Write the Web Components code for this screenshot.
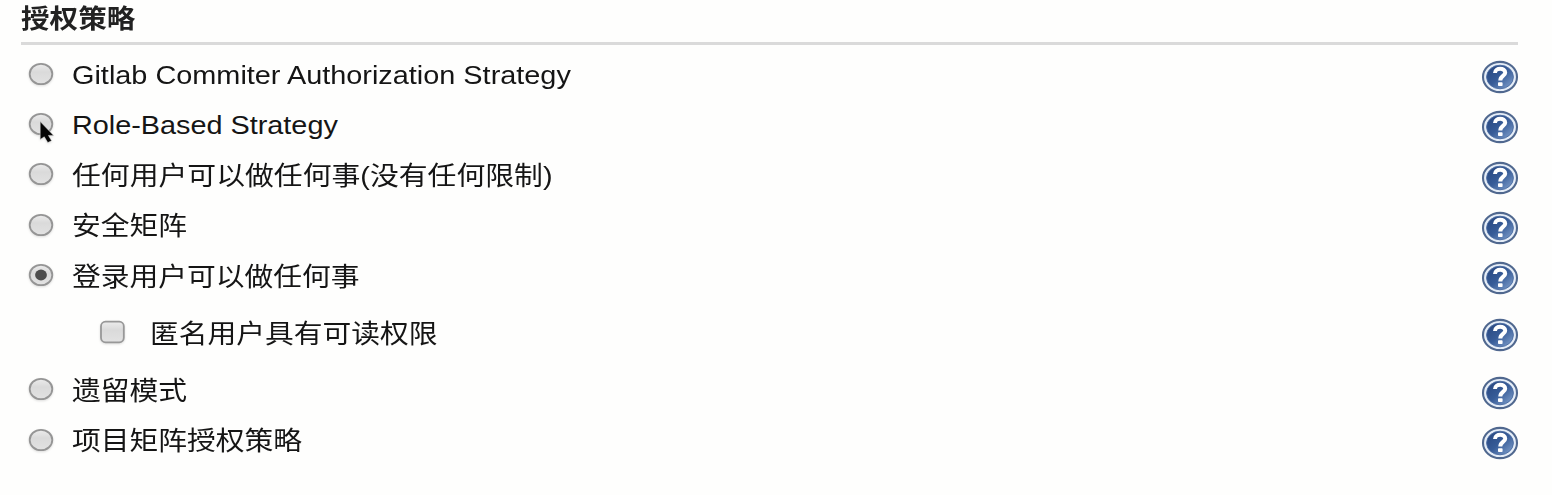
<!DOCTYPE html>
<html lang="zh-CN">
<head>
<meta charset="utf-8">
<title>授权策略</title>
<style>
html,body{margin:0;background:#fefefd;color:#151515;overflow:hidden}
body{font-family:"Liberation Sans","Noto Sans CJK SC",sans-serif;font-size:26px}
</style>
</head>
<body>
<strategy-section heading="授权策略">
  <strategy-row style="--sx:1.110" label="Gitlab Commiter Authorization Strategy"></strategy-row>
  <strategy-row hover style="--sx:1.108;--dy:-1px" label="Role-Based Strategy"></strategy-row>
  <strategy-row style="--sx:1.109" label="任何用户可以做任何事(没有任何限制)"></strategy-row>
  <strategy-row label="安全矩阵"></strategy-row>
  <strategy-row checked label="登录用户可以做任何事"></strategy-row>
  <strategy-row nested label="匿名用户具有可读权限"></strategy-row>
  <strategy-row label="遗留模式"></strategy-row>
  <strategy-row label="项目矩阵授权策略"></strategy-row>
</strategy-section>
<script>
class StrategySection extends HTMLElement {
  constructor() {
    super();
    this.attachShadow({mode:'open'}).innerHTML = `<style>
      :host{display:block;box-sizing:border-box;height:495px;padding:0 34px 0 21px}
      header{height:42px;border-bottom:3px solid #dadada}
      h1{margin:0;width:max-content;font-size:26px;line-height:38px;font-weight:700;white-space:nowrap;color:#222;transform:scaleX(1.1);transform-origin:left}
      main{padding-top:5px}
    </style><header><h1></h1></header><main><slot></slot></main>`;
    this.shadowRoot.querySelector('h1').textContent = this.getAttribute('heading');
  }
}
class ChoiceMark extends HTMLElement {
  connectedCallback() {
    const root = this.attachShadow({mode:'open'});
    const box = this.getAttribute('kind') === 'checkbox';
    const shape = box
      ? '<rect x="2" y="2.7" width="22.8" height="20.6" rx="4.5" fill="url(#f)" stroke="#989898" stroke-width="1.8"/>'
      : '<ellipse cx="14" cy="13" rx="11.3" ry="10.2" fill="url(#f)" stroke="#959595" stroke-width="1.8"/>';
    const dot = this.hasAttribute('checked') ? '<ellipse cx="14" cy="13" rx="5.9" ry="5.4" fill="#4c4c4c"/>' : '';
    const cursor = this.hasAttribute('hover')
      ? '<path d="M13.2 10.6V28.4L17.3 25.8L20.8 31.6L24.6 29.8L21.4 24.4H26.6Z" fill="#050505" stroke="#ddd" stroke-width=".5"/>' : '';
    root.innerHTML = `<style>:host{display:block;width:28px;height:26px}svg{display:block;overflow:visible;filter:drop-shadow(0 1px 1px #0002)}</style>
      <svg width="28" height="26" viewBox="0 0 28 26"><defs><linearGradient id="f" x2="0" y2="1"><stop stop-color="#ececec"/><stop offset=".4" stop-color="#dadada"/><stop offset="1" stop-color="#e2e2e2"/></linearGradient></defs>${shape}${dot}${cursor}</svg>`;
  }
}
class HelpIcon extends HTMLElement {
  constructor() {
    super();
    this.attachShadow({mode:'open'}).innerHTML = `<style>:host{display:block;width:38px;height:34px}svg{display:block}</style>
      <svg width="38" height="34" viewBox="0 0 38 34">
      <defs><linearGradient id="b" x1="0" y1="0" x2="1" y2="1"><stop stop-color="#27457d"/><stop offset=".5" stop-color="#375c98"/><stop offset="1" stop-color="#86a5d0"/></linearGradient></defs>
      <ellipse cx="19" cy="17" rx="17" ry="15.1" fill="#e6eef8" stroke="#50688f" stroke-width="2.1"/>
      <ellipse cx="19" cy="17" rx="13.4" ry="11.8" fill="url(#b)" stroke="#486aa0" stroke-width=".9"/>
      <path d="M14 12.9C14 7.4 24.3 7.5 24.2 12.6C24.1 16.2 19.3 15.8 19.3 20.5" fill="none" stroke="#fff" stroke-width="4"/>
      <rect x="17" y="22.2" width="4.6" height="3.9" rx=".8" fill="#fff"/></svg>`;
  }
}
class StrategyRow extends HTMLElement {
  constructor() {
    super();
    const nested = this.hasAttribute('nested');
    const flags = (this.hasAttribute('checked') ? ' checked' : '') + (this.hasAttribute('hover') ? ' hover' : '');
    this.attachShadow({mode:'open'}).innerHTML = `<style>
      :host{display:flex;align-items:center;height:50.35px;padding-left:6px;box-sizing:border-box}
      :host([nested]){height:64px;padding-left:77.5px}
      choice-mark{margin-top:-3px;flex:none}
      span{margin-left:17px;white-space:nowrap;line-height:38px;transform:translateY(var(--dy,0)) scaleX(var(--sx,1.106));transform-origin:left}
      :host([nested]) span{margin-left:23.5px}
      help-icon{margin-left:auto;margin-right:-1px;margin-top:3.5px;flex:none}
    </style><choice-mark kind="${nested ? 'checkbox' : 'radio'}"${flags}></choice-mark><span></span><help-icon></help-icon>`;
    this.shadowRoot.querySelector('span').textContent = this.getAttribute('label');
  }
}
customElements.define('choice-mark', ChoiceMark);
customElements.define('help-icon', HelpIcon);
customElements.define('strategy-row', StrategyRow);
customElements.define('strategy-section', StrategySection);
</script>
</body>
</html>
